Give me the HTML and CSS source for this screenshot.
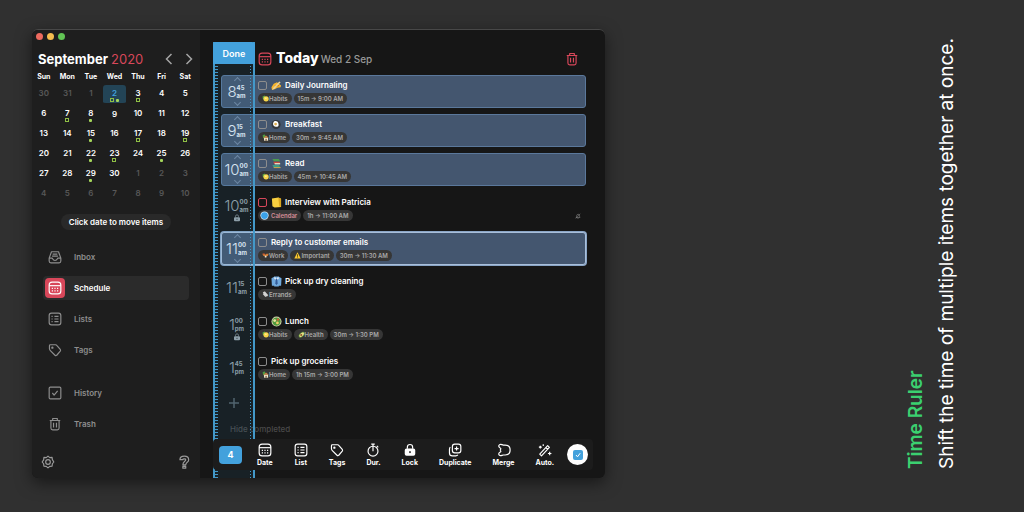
FILE: index.html
```html
<!DOCTYPE html>
<html lang="en">
<head>
    <meta charset="UTF-8">
    <meta name="viewport" content="width=device-width, initial-scale=1.0">
    <title>Time Ruler</title>
    <link rel="stylesheet" href="styles.css">
</head>
<body>
    <!-- Shared icons -->
    <svg class="sprite" aria-hidden="true">
        <symbol id="i-inbox" viewBox="0 0 24 24"><path d="M6 3h12l4 11v5a3 3 0 0 1-3 3H5a3 3 0 0 1-3-3v-5z M2 14h5c1 0 1 4 5 4s4-4 5-4h5 M8 7h8 M7 10.500h10"/></symbol>
        <symbol id="i-cal" viewBox="0 0 24 24"><rect x="2" y="2" width="20" height="20" rx="5"/><path d="M2 8h20"/><path stroke-dasharray="2 2.500" d="M6.500 12.500h12 M6.500 17h12"/></symbol>
        <symbol id="i-list" viewBox="0 0 24 24"><rect x="2" y="2" width="20" height="20" rx="4"/><path d="M6 7.500h2 M11 7.500h7 M6 12h2 M11 12h7 M6 16.500h2 M11 16.500h7"/></symbol>
        <symbol id="i-tag" viewBox="0 0 24 24"><path d="M4 3h9c1 0 1.500.3 2 1l6 7c.8 1 .8 2 0 3l-6 7c-.8 1-2 1-3 0l-8-8c-1-1-1.500-1.500-1.500-3V4.500C2.500 3.500 3 3 4 3z"/><circle cx="7.500" cy="8" r="1"/></symbol>
        <symbol id="i-check" viewBox="0 0 24 24"><rect x="2" y="2" width="20" height="20" rx="2"/><path d="M7.500 12l3 3.500 6-7"/></symbol>
        <symbol id="i-trash" viewBox="0 0 24 24"><path d="M3 6h18 M8 6V2.500h8V6 M5 6v13a3 3 0 0 0 3 3h8a3 3 0 0 0 3-3V6 M9.500 10v8 M14.500 10v8"/></symbol>
        <symbol id="i-gear" viewBox="0 0 24 24"><path d="M12 2l3 2.500 4-.5.500 4L22 12l-2.500 3-.5 4-4 .5L12 22l-3-2.500-4-.5-.5-4L2 12l2.500-3.500L5 4l4 .5z"/><circle cx="12" cy="12" r="4"/></symbol>
        <symbol id="i-help" viewBox="0 0 24 24"><path d="M5 8c0-8 15-8 15 0 0 5-5 4-5 9h-5c0-6 5-6 5-9 0-2-5-2-5 0z M10 19.500h5v3h-5z"/></symbol>
        <symbol id="i-clock" viewBox="0 0 24 24"><circle cx="12" cy="14" r="8.500"/><path d="M9 2h6 M12 2v12 M18.500 5l2.500 2.500"/></symbol>
        <symbol id="i-lock" viewBox="0 0 24 24"><path d="M7.500 10V7a4.500 4.500 0 0 1 9 0v3"/><path class="solid" d="M6 9.500h12a3 3 0 0 1 3 3V19a3 3 0 0 1-3 3H6a3 3 0 0 1-3-3v-6.500a3 3 0 0 1 3-3zM12 14a1.600 1.600 0 1 0 .01 0z"/></symbol>
        <symbol id="i-dup" viewBox="0 0 24 24"><rect x="7.500" y="2" width="14.500" height="15" rx="4"/><path d="M14.700 6v7 M11.200 9.500h7 M4 7c-1 .8-1.500 2-1.500 3.500V17c0 3 2 5 5 5h6c1.500 0 2.500-.5 3.500-1.500"/></symbol>
        <symbol id="i-merge" viewBox="0 0 24 24"><path d="M5 2.500c2.500-1 3.500 1 6 1h3c5 0 8.500 3.500 8.500 8.500s-3.500 8.500-8.500 8.500h-3c-2.500 0-3.500 2-6 1-3-1.500-2.500-4 0-5.500 2-1 2-2 .5-4 1.500-2 1.500-3-.5-4C2.500 6.500 2 4 5 2.500z"/></symbol>
        <symbol id="i-wand" viewBox="0 0 24 24"><path d="M3 19L16.500 4.500l3 3L6 22z M4 4.500v5 M1.500 7h5 M20 15v6 M17 18h6 M9 2v3 M13.500 8l3 3"/></symbol>
        <symbol id="i-nobell" viewBox="0 0 24 24"><path d="M4 18h16c-3-3 0-12-7-13-8 0-5 9-9 13z M10 22h4 M3 22L21 3"/></symbol>

        <!-- Emoji -->
        <symbol id="e-write" viewBox="0 0 24 24"><path fill="#f7b42c" d="M1 16l5-8 7-3 4 3 5 4-1 4-7 1-6 3-6 1z"/><path fill="#c97b12" d="M8 12l9-1 1 2-9 2z"/><path fill="#e8d29a" d="M2 22l3-5 13-14 3 2L8 19z"/></symbol>
        <symbol id="e-egg" viewBox="0 0 24 24"><circle cx="11" cy="12" r="10" fill="#34383c"/><path fill="#fff" d="M5 8c3-6 10-3 11 1s1 8-4 8-9-4-7-9z"/><circle cx="10" cy="11" r="3" fill="#e0b050"/></symbol>
        <symbol id="e-books" viewBox="0 0 24 24"><path fill="#4c9b4f" d="M3 2h14l3 5H6z"/><path fill="#c6483c" d="M5 8h14v5H7z"/><path fill="#e8e2c8" d="M8 11h12v3H8z"/><path fill="#3f9c84" d="M3 15h15l2 6H6z"/><path fill="#dca844" d="M6 20h15v2H6z"/></symbol>
        <symbol id="e-note" viewBox="0 0 24 24"><path fill="#f9cf3f" d="M2 3l14-2 6 3v18L8 23l-5-3z"/><path fill="#dba51d" d="M16 1l6 3v18l-4-2z"/></symbol>
        <symbol id="e-shirt" viewBox="0 0 24 24"><path fill="#70a9dd" d="M1 5l7-4h8l7 4-1 16h-5v2H7v-2H2z"/><path fill="#e4effa" d="M8 1l4 5 4-5 1 5-5 3-5-3z"/><path fill="#345c98" d="M10.500 6h3l1 10-2.500 4-2.500-4z"/></symbol>
        <symbol id="e-salad" viewBox="0 0 24 24"><circle cx="12" cy="12" r="11" fill="#d9d4b0"/><circle cx="12" cy="12" r="9" fill="#4f9a3b"/><circle cx="8" cy="10" r="3" fill="#e9e2a0"/><circle cx="15" cy="8" r="2.500" fill="#dd5737"/><circle cx="14" cy="15" r="3" fill="#f0c969"/></symbol>
        <symbol id="e-habit" viewBox="0 0 24 24"><path fill="#58a846" d="M2 5l8-3 1 15-8-3z"/><circle cx="14" cy="13" r="9" fill="#f7d64a"/><path fill="#fff3a1" d="M10 9h6v4h-6z"/></symbol>
        <symbol id="e-home" viewBox="0 0 24 24"><path fill="#4e9e43" d="M2 5l6-4 4 5-7 10z"/><path fill="#f3ead2" d="M7 12h14v11H7z"/><path fill="#c98546" d="M4 13l10-8 9 8z"/><path fill="#6c4a2a" d="M12 16h4v7h-4z"/></symbol>
        <symbol id="e-globe" viewBox="0 0 24 24"><circle cx="12" cy="12" r="11" fill="#d6ebf7"/><circle cx="12" cy="12" r="9" fill="#3ba2e8"/></symbol>
        <symbol id="e-work" viewBox="0 0 24 24"><path fill="#d27b35" d="M1 6h8l3 3 3-3h8l-3 8H5z"/><path fill="#f4e1ca" d="M9 13h7l-1 6h-5z"/><path fill="#b93d2e" d="M3 5h6v3H3z"/></symbol>
        <symbol id="e-warn" viewBox="0 0 24 24"><path fill="#fbc82f" d="M12 1l11 21H1z"/><path fill="#332a10" d="M11 8h2.500v8H11zM11 18h2.500v2H11z"/></symbol>
        <symbol id="e-avocado" viewBox="0 0 24 24"><path fill="#63963a" d="M3 20C-1 13 13 1 20 3s3 12-5 17-10 3-12 0z"/><path fill="#eadf88" d="M5 18C3 13 13 4 18 5s2 9-4 13-8 2-9 0z"/><circle cx="11" cy="14" r="3.500" fill="#8c542c"/></symbol>
        <symbol id="e-clip" viewBox="0 0 24 24"><path fill="none" stroke="#d4d4d4" stroke-width="4" d="M4 4l14 14M8 2l12 14M4 9l9 10"/></symbol>
    </svg>

    <div class="window">
        <aside class="sidebar">
            <div class="lights"><i class="red"></i><i class="yellow"></i><i class="green"></i></div>
            <div class="month">
                <h1>September <span>2020</span></h1>
                <button aria-label="Previous month"><svg viewBox="0 0 8 12"><path d="M6.500 1L1.500 6l5 5"/></svg></button>
                <button aria-label="Next month"><svg viewBox="0 0 8 12"><path d="M1.500 1l5 5-5 5"/></svg></button>
            </div>
            <table class="calendar">
                <thead>
                    <tr><th>Sun</th><th>Mon</th><th>Tue</th><th>Wed</th><th>Thu</th><th>Fri</th><th>Sat</th></tr>
                </thead>
                <tbody>
                    <tr><td class="out">30</td><td class="out">31</td><td class="out">1</td><td class="today">2<b><i class="box"></i><i></i></b></td><td>3<b><i class="box"></i></b></td><td>4</td><td>5</td></tr>
                    <tr><td>6</td><td>7<b><i class="box"></i></b></td><td>8<b><i></i></b></td><td>9</td><td>10</td><td>11</td><td>12</td></tr>
                    <tr><td>13</td><td>14</td><td>15<b><i></i></b></td><td>16</td><td>17<b><i class="box"></i></b></td><td>18</td><td>19<b><i class="box"></i></b></td></tr>
                    <tr><td>20</td><td>21</td><td>22<b><i></i></b></td><td>23<b><i class="box"></i></b></td><td>24</td><td>25<b><i></i></b></td><td>26</td></tr>
                    <tr><td>27</td><td>28</td><td>29<b><i></i></b></td><td>30</td><td class="out">1</td><td class="out">2</td><td class="out">3</td></tr>
                    <tr><td class="out">4</td><td class="out">5</td><td class="out">6</td><td class="out">7</td><td class="out">8</td><td class="out">9</td><td class="out">10</td></tr>
                </tbody>
            </table>
            <p class="hint">Click date to move items</p>
            <nav class="menu">
                <a href="#"><span class="ico"><svg class="icon"><use href="#i-inbox"/></svg></span>Inbox</a>
                <a href="#" class="active"><span class="ico"><svg class="icon"><use href="#i-cal"/></svg></span>Schedule</a>
                <a href="#"><span class="ico"><svg class="icon"><use href="#i-list"/></svg></span>Lists</a>
                <a href="#"><span class="ico"><svg class="icon"><use href="#i-tag"/></svg></span>Tags</a>
                <a href="#" class="split"><span class="ico"><svg class="icon"><use href="#i-check"/></svg></span>History</a>
                <a href="#"><span class="ico"><svg class="icon"><use href="#i-trash"/></svg></span>Trash</a>
            </nav>
            <div class="side-foot">
                <button aria-label="Settings"><svg class="icon"><use href="#i-gear"/></svg></button>
                <button aria-label="Help"><svg class="icon"><use href="#i-help"/></svg></button>
            </div>
        </aside>

        <main class="main">
            <div class="ruler"></div>
            <header class="head">
                <button class="done">Done</button>
                <svg class="icon"><use href="#i-cal"/></svg>
                <h2>Today <span>Wed 2 Sep</span></h2>
                <button class="trash" aria-label="Delete"><svg class="icon"><use href="#i-trash"/></svg></button>
            </header>

            <ul class="list">
                <li class="row picked">
                    <div class="time"><span>8</span><small>45<br>am</small></div>
                    <div class="body">
                        <label><input type="checkbox"><svg class="emoji"><use href="#e-write"/></svg>Daily Journaling</label>
                        <div class="tags"><span><svg><use href="#e-habit"/></svg>Habits</span><span>15m → 9:00 AM</span></div>
                    </div>
                </li>
                <li class="row picked">
                    <div class="time"><span>9</span><small>15<br>am</small></div>
                    <div class="body">
                        <label><input type="checkbox"><svg class="emoji"><use href="#e-egg"/></svg>Breakfast</label>
                        <div class="tags"><span><svg><use href="#e-home"/></svg>Home</span><span>30m → 9:45 AM</span></div>
                    </div>
                </li>
                <li class="row picked">
                    <div class="time"><span>10</span><small>00<br>am</small></div>
                    <div class="body">
                        <label><input type="checkbox"><svg class="emoji"><use href="#e-books"/></svg>Read</label>
                        <div class="tags"><span><svg><use href="#e-habit"/></svg>Habits</span><span>45m → 10:45 AM</span></div>
                    </div>
                </li>
                <li class="row">
                    <div class="time locked"><span>10</span><small>00<br>am</small><svg class="icon lock"><use href="#i-lock"/></svg></div>
                    <div class="body">
                        <label><input type="checkbox" class="event"><svg class="emoji"><use href="#e-note"/></svg>Interview with Patricia</label>
                        <div class="tags"><span class="cal"><svg><use href="#e-globe"/></svg>Calendar</span><span>1h → 11:00 AM</span><svg class="icon bell"><use href="#i-nobell"/></svg></div>
                    </div>
                </li>
                <li class="row picked current">
                    <div class="time"><span>11</span><small>00<br>am</small></div>
                    <div class="body">
                        <label><input type="checkbox">Reply to customer emails</label>
                        <div class="tags"><span><svg><use href="#e-work"/></svg>Work</span><span><svg><use href="#e-warn"/></svg>Important</span><span>30m → 11:30 AM</span></div>
                    </div>
                </li>
                <li class="row">
                    <div class="time"><span>11</span><small>15<br>am</small></div>
                    <div class="body">
                        <label><input type="checkbox"><svg class="emoji"><use href="#e-shirt"/></svg>Pick up dry cleaning</label>
                        <div class="tags"><span><svg><use href="#e-clip"/></svg>Errands</span></div>
                    </div>
                </li>
                <li class="row">
                    <div class="time locked"><span>1</span><small>00<br>pm</small><svg class="icon lock"><use href="#i-lock"/></svg></div>
                    <div class="body">
                        <label><input type="checkbox"><svg class="emoji"><use href="#e-salad"/></svg>Lunch</label>
                        <div class="tags"><span><svg><use href="#e-habit"/></svg>Habits</span><span><svg><use href="#e-avocado"/></svg>Health</span><span>30m → 1:30 PM</span></div>
                    </div>
                </li>
                <li class="row">
                    <div class="time"><span>1</span><small>45<br>pm</small></div>
                    <div class="body">
                        <label><input type="checkbox">Pick up groceries</label>
                        <div class="tags"><span><svg><use href="#e-home"/></svg>Home</span><span>1h 15m → 3:00 PM</span></div>
                    </div>
                </li>
            </ul>
            <button class="add" aria-label="Add item"><svg viewBox="0 0 10 10"><path d="M5 0v10M0 5h10"/></svg></button>
            <button class="hide">Hide completed</button>

            <div class="toolbar">
                <button class="count">4</button>
                <button><svg class="icon"><use href="#i-cal"/></svg>Date</button>
                <button><svg class="icon"><use href="#i-list"/></svg>List</button>
                <button><svg class="icon"><use href="#i-tag"/></svg>Tags</button>
                <button><svg class="icon"><use href="#i-clock"/></svg>Dur.</button>
                <button><svg class="icon"><use href="#i-lock"/></svg>Lock</button>
                <button><svg class="icon"><use href="#i-dup"/></svg>Duplicate</button>
                <button><svg class="icon"><use href="#i-merge"/></svg>Merge</button>
                <button><svg class="icon"><use href="#i-wand"/></svg>Auto.</button>
                <button class="confirm" aria-label="Complete"><svg viewBox="0 0 10 10"><rect width="10" height="10" rx="2"/><path d="M3 5l1.500 1.800L7.200 3.200"/></svg></button>
            </div>
        </main>
    </div>

    <div class="caption">
        <h3>Time Ruler</h3>
        <p>Shift the time of multiple items together at once.</p>
    </div>
</body>
</html>
```

FILE: styles.css
```css
* {
    box-sizing: border-box;
}
body {
    font-family: Inter, "Liberation Sans", sans-serif;
    margin: 0;
    padding: 29px 62px 34px 32px;
    background-color: #303030;
    color: #fff;
    min-height: 100vh;
    display: flex;
    justify-content: space-between;
}
h1, h2, h3, p, ul {
    margin: 0;
    padding: 0;
}
button {
    font: inherit;
    color: inherit;
    background: none;
    border: none;
    padding: 0;
    cursor: pointer;
}
svg {
    display: block;
    flex: none;
}
.sprite {
    position: absolute;
    width: 0;
    height: 0;
}
.icon {
    width: 14px;
    height: 14px;
    fill: none;
    stroke: currentColor;
    stroke-width: 2;
    stroke-linejoin: round;
}
.solid {
    fill: currentColor;
    fill-rule: evenodd;
    stroke: none;
}
.window {
    flex: 0 0 56vw;
    min-width: 0;
    display: flex;
    background-color: #161616;
    border-radius: 6px;
    border-top: 1px solid #484848;
    box-shadow: 0 5px 16px rgba(0, 0, 0, 0.5);
}

/* Sidebar */
.sidebar {
    flex: 0 0 168px;
    display: flex;
    flex-direction: column;
    background-color: #1e1e1e;
    border-radius: 6px 0 0 6px;
}
.lights {
    display: flex;
    gap: 4px;
    padding: 3px 4px 0;
}
.lights i {
    width: 7px;
    height: 7px;
    border-radius: 50%;
}
.red { background-color: #ed6a5f; }
.yellow { background-color: #f5bd4f; }
.green { background-color: #61c454; }
.month {
    display: flex;
    align-items: center;
    gap: 12px;
    padding: 11px 7px 0 6px;
}
.month h1 {
    flex: 1;
    font-size: 13px;
    line-height: 16px;
    font-weight: 700;
}
.month h1 span {
    font-weight: 400;
    color: #d8475a;
}
.month svg {
    width: 8px;
    height: 12px;
    fill: none;
    stroke: #a5a5a5;
    stroke-width: 1.5;
}
.calendar {
    table-layout: fixed;
    width: 165px;
    margin-top: 2px;
    border-collapse: collapse;
    font-size: 8px;
    line-height: 10px;
    font-weight: 600;
    text-align: center;
}
.calendar th {
    height: 16px;
    padding: 0;
    font-size: 7px;
    font-weight: 700;
}
.calendar td {
    height: 20px;
    padding: 3px 0 0;
    vertical-align: top;
}
.calendar .out {
    color: #585858;
}
.calendar .today {
    color: #41a5e0;
    background-color: #234456;
    background-clip: padding-box;
    border-radius: 3px;
    border-bottom: 2px solid transparent;
}
.calendar b {
    display: flex;
    justify-content: center;
    align-items: center;
    gap: 2px;
    height: 4px;
}
.calendar b i {
    width: 3px;
    height: 3px;
    border-radius: 1px;
    background-color: #a4d65a;
}
.calendar b .box {
    width: 4px;
    height: 4px;
    border: 1px solid #8fbf45;
    border-radius: 0;
    background: none;
}
.hint {
    align-self: center;
    margin-top: 9px;
    padding: 0 8px;
    border-radius: 8px;
    background-color: #292929;
    font-size: 8px;
    line-height: 16px;
    font-weight: 600;
}
.menu {
    display: flex;
    flex-direction: column;
    gap: 7px;
    padding: 15px 11px 0;
}
.menu a {
    display: flex;
    align-items: center;
    gap: 9px;
    height: 24px;
    padding-left: 2px;
    border-radius: 4px;
    font-size: 8px;
    font-weight: 600;
    color: #8e8e8e;
    text-decoration: none;
}
.ico {
    display: flex;
    align-items: center;
    justify-content: center;
    width: 20px;
    height: 20px;
    border-radius: 4px;
}
.menu .active {
    background-color: #2b2b2b;
    color: #fff;
}
.menu .active .ico {
    background-color: #d8475a;
}
.menu .split {
    margin-top: 12px;
}
.side-foot {
    display: flex;
    justify-content: space-between;
    margin-top: auto;
    padding: 0 9px 9px;
    color: #9a9a9a;
}

/* Day list */
.main {
    flex: 1;
    min-width: 0;
    position: relative;
    display: flex;
    flex-direction: column;
    padding: 12px 12px 8px 13px;
}
.ruler {
    position: absolute;
    z-index: 1;
    top: 12px;
    bottom: 0;
    left: 13px;
    width: 42px;
    border-left: 2px solid #4398c8;
    border-right: 2px solid #4398c8;
    background:
        repeating-linear-gradient(#4398c8 0 1px, transparent 1px 3px) left / 3px 100% no-repeat,
        repeating-linear-gradient(#4398c8 0 1px, transparent 1px 3px) right 2px top / 1px 100% no-repeat,
        rgba(50, 140, 190, 0.1);
    pointer-events: none;
}
.head {
    display: flex;
    align-items: center;
    height: 33px;
}
.head .icon {
    color: #d8475a;
}
.head h2 {
    flex: 1;
    margin-left: 4px;
    font-size: 14px;
    line-height: 18px;
    font-weight: 800;
}
.head h2 span {
    margin-left: -1px;
    font-size: 10px;
    font-weight: 500;
    color: #999;
}
.done {
    position: relative;
    z-index: 2;
    align-self: flex-start;
    width: 42px;
    height: 22px;
    margin-right: 3px;
    border-radius: 3px 3px 0 0;
    background-color: #43a1dc;
    font-size: 9px;
    font-weight: 600;
}
.head .trash {
    margin-right: 14px;
}
.list {
    list-style: none;
    padding: 0 7px 0 8px;
    display: flex;
    flex-direction: column;
    gap: 6px;
}
.row {
    display: flex;
    height: 34px;
    border-radius: 3px;
    border: 1px solid transparent;
}
.picked {
    height: 33px;
    background-color: #44566f;
    border-color: #5b789b;
}
.current {
    border-color: #a9bfda;
    box-shadow: 0 0 0 1px #8aa5c6;
}
.time {
    position: relative;
    display: flex;
    justify-content: center;
    align-items: center;
    width: 32px;
    padding-right: 3px;
    color: #98a2a8;
}
.time span {
    font-size: 15px;
    line-height: 20px;
    font-weight: 300;
}
.time small {
    font-size: 6px;
    line-height: 8px;
    font-weight: 700;
}
.picked .time {
    color: #e6eef7;
}
/* Nudge arrows above and below the time */
.picked .time::before,
.picked .time::after {
    content: "";
    position: absolute;
    left: 13px;
    width: 4px;
    height: 4px;
    border: 1px solid #7488a2;
    border-width: 1px 0 0 1px;
    transform: rotate(45deg);
}
.picked .time::before {
    top: 2px;
}
.picked .time::after {
    bottom: 2px;
    transform: rotate(225deg);
}
.time.locked {
    padding-bottom: 6px;
}
.lock {
    position: absolute;
    left: 11px;
    bottom: 3px;
    width: 8px;
    height: 8px;
}
.body {
    flex: 1;
    padding: 3px 4px 0;
}
.body label {
    display: flex;
    align-items: center;
    gap: 3px;
    height: 12px;
    font-size: 8px;
    font-weight: 600;
}
.body input {
    appearance: none;
    width: 9px;
    height: 9px;
    margin: 0 1px 0 0;
    border: 1px solid #8d8d8d;
    border-radius: 2px;
}
.body input.event {
    border-color: #d8475a;
}
.emoji {
    width: 11px;
    height: 11px;
}
.tags {
    display: flex;
    align-items: center;
    gap: 2px;
    margin-top: 2px;
}
.tags span {
    display: flex;
    align-items: center;
    height: 11px;
    padding: 0 4px;
    border-radius: 6px;
    background-color: #363636;
    color: #a9a9a9;
    font-size: 6px;
    font-weight: 600;
}
.tags span svg {
    width: 7px;
    height: 7px;
}
.tags .cal {
    color: #d58e98;
    padding-left: 2px;
    gap: 2px;
}
.tags .cal svg {
    width: 9px;
    height: 9px;
}
.tags .bell {
    width: 6px;
    height: 6px;
    margin-left: auto;
    color: #999;
}
.add {
    align-self: flex-start;
    margin: 13px 0 0 16px;
}
.add svg {
    width: 10px;
    height: 10px;
    stroke: #566067;
    stroke-width: 1.5;
}
.hide {
    align-self: flex-start;
    margin: 15px 0 0 17px;
    font-size: 8px;
    line-height: 12px;
    font-weight: 500;
    color: #4a4a4a;
}

/* Bottom toolbar */
.toolbar {
    position: relative;
    z-index: 2;
    display: flex;
    align-items: center;
    gap: 21px;
    height: 31px;
    margin-top: auto;
    padding: 0 5px 0 6px;
    border-radius: 4px;
    background-color: #1c1c1c;
}
.toolbar button {
    flex: none;
    display: flex;
    flex-direction: column;
    align-items: center;
    gap: 1px;
    font-size: 7px;
    line-height: 9px;
    font-weight: 700;
}
.toolbar .count {
    display: block;
    width: 23px;
    height: 18px;
    margin-right: -6px;
    border-radius: 4px;
    background-color: #43a1dc;
    font-size: 9px;
}
.toolbar .confirm {
    justify-content: center;
    width: 21px;
    height: 21px;
    margin-left: -8px;
    border-radius: 50%;
    background-color: #fff;
}
.confirm svg {
    width: 10px;
    height: 10px;
    fill: #43a1dc;
}
.confirm path {
    fill: none;
    stroke: #fff;
}

/* Vertical caption */
.caption {
    writing-mode: vertical-rl;
    transform: rotate(180deg);
    margin: 9px 0;
    font-size: 19px;
    line-height: 31px;
}
.caption h3 {
    font-size: 19px;
    font-weight: 600;
    color: #3bd070;
}
```
